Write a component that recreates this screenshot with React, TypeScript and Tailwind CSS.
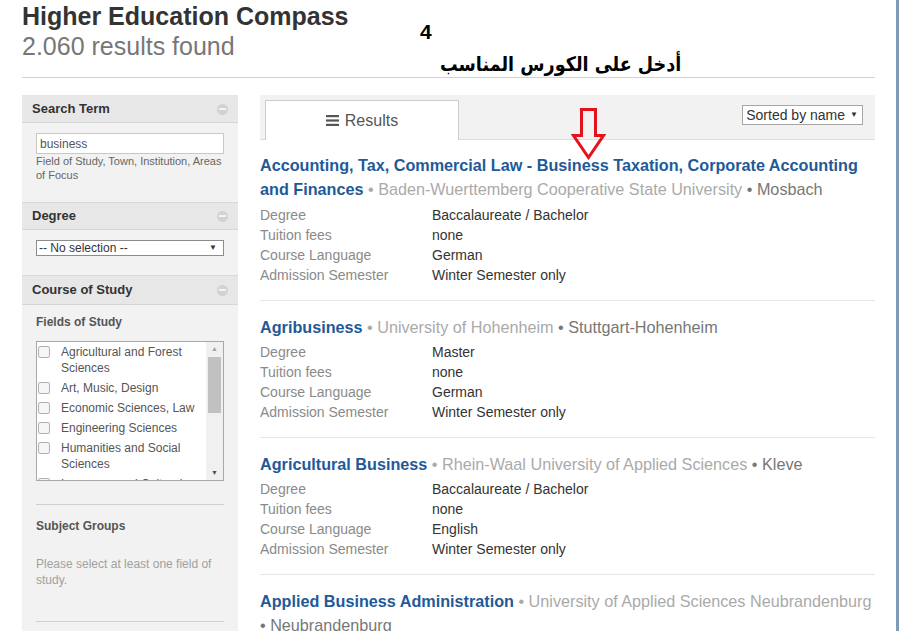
import React from "react";

function Minus() {
  return (
    <span className="flex h-[11px] w-[11px] items-center justify-center rounded-full bg-[#d2d2d2]">
      <span className="block h-[2px] w-[7px] bg-[#f4f4f4]" />
    </span>
  );
}

function PanelHeader({ title, first, tall }: { title: string; first?: boolean; tall?: boolean }) {
  return (
    <div
      className={
        "flex items-center justify-between border-b border-[#d6d6d6] bg-[#e7e7e7] pl-[10px] pr-[10px] " +
        (tall ? "h-[30px] " : "h-[28px] ") +
        (first ? "border-t border-t-[#e6e6e6]" : "border-t border-t-[#d9d9d9]")
      }
    >
      <span className="text-[13px] font-bold text-[#333]">{title}</span>
      <Minus />
    </div>
  );
}

const fields: string[] = [
  "Agricultural and Forest Sciences",
  "Art, Music, Design",
  "Economic Sciences, Law",
  "Engineering Sciences",
  "Humanities and Social Sciences",
  "Language and Cultural Studies",
];

type Result = {
  title: string;
  inst: string;
  city: string;
  degree: string;
  fees: string;
  lang: string;
  sem: string;
};

const results: Result[] = [
  {
    title: "Accounting, Tax, Commercial Law - Business Taxation, Corporate Accounting and Finances",
    inst: "Baden-Wuerttemberg Cooperative State University",
    city: "Mosbach",
    degree: "Baccalaureate / Bachelor",
    fees: "none",
    lang: "German",
    sem: "Winter Semester only",
  },
  {
    title: "Agribusiness",
    inst: "University of Hohenheim",
    city: "Stuttgart-Hohenheim",
    degree: "Master",
    fees: "none",
    lang: "German",
    sem: "Winter Semester only",
  },
  {
    title: "Agricultural Business",
    inst: "Rhein-Waal University of Applied Sciences",
    city: "Kleve",
    degree: "Baccalaureate / Bachelor",
    fees: "none",
    lang: "English",
    sem: "Winter Semester only",
  },
  {
    title: "Applied Business Administration",
    inst: "University of Applied Sciences Neubrandenburg",
    city: "Neubrandenburg",
    degree: "Bachelor",
    fees: "none",
    lang: "German",
    sem: "Winter Semester only",
  },
];

function ResultItem({ r, first }: { r: Result; first?: boolean }) {
  return (
    <div className={"border-b border-[#e6e6e6] pb-[15px] " + (first ? "pt-[13px]" : "pt-[14px]")}>
      <div className="text-[16.2px] font-bold leading-[24px] text-[#1f5a98]">
        {r.title}
        <span className="font-normal text-[#aaaaaa]"> • {r.inst}</span>
        <span className="font-normal text-[#777]"> • {r.city}</span>
      </div>
      <div
        className={
          "grid grid-cols-[172px_1fr] text-[14px] leading-[20px] " + (first ? "mt-[4px]" : "mt-[3px]")
        }
      >
        <div className="text-[#8a8a8a]">Degree</div>
        <div className="text-[#333]">{r.degree}</div>
        <div className="text-[#8a8a8a]">Tuition fees</div>
        <div className="text-[#333]">{r.fees}</div>
        <div className="text-[#8a8a8a]">Course Language</div>
        <div className="text-[#333]">{r.lang}</div>
        <div className="text-[#8a8a8a]">Admission Semester</div>
        <div className="text-[#333]">{r.sem}</div>
      </div>
    </div>
  );
}

export default function App() {
  return (
    <div className="relative h-[631px] w-[899px] overflow-hidden border-r-[3px] border-[#7f9bb5] bg-white font-['Liberation_Sans',Arial,sans-serif]">
      <div className="w-[875px] pl-[22px]">
        {/* Header */}
        <div className="pt-[2px]">
          <div className="text-[25px] font-bold leading-[29px] text-[#333]">Higher Education Compass</div>
          <div className="mt-[1px] text-[25px] leading-[29px] text-[#777]">2.060 results found</div>
          <div className="mt-[16px] h-px bg-[#d2d2d2]" />
        </div>

        <div className="mt-[17px] flex gap-[22px]">
          {/* Sidebar */}
          <div className="h-[540px] w-[216px] shrink-0 bg-[#f2f2f2]">
            <PanelHeader title="Search Term" first />
            <div className="px-[14px] pb-[20px] pt-[10px]">
              <div className="flex h-[21px] items-center border border-[#c8c8c8] bg-white px-[3px] text-[12px] text-[#555]">
                business
              </div>
              <div className="text-[11px] leading-[14px] text-[#666]">
                Field of Study, Town, Institution, Areas of Focus
              </div>
            </div>

            <PanelHeader title="Degree" />
            <div className="px-[14px] pb-[19px] pt-[10px]">
              <div className="flex h-[16px] items-center justify-between border border-[#8c8c8c] bg-white pl-[2px] pr-[6px] text-[12px] text-[#333]">
                <span>-- No selection --</span>
                <span className="text-[8px] leading-none">▼</span>
              </div>
            </div>

            <PanelHeader title="Course of Study" tall />
            <div className="px-[14px] pt-[9px]">
              <div className="text-[12px] font-bold leading-[16px] text-[#555]">Fields of Study</div>
              <div className="mt-[11px] flex h-[140px] overflow-hidden border border-[#a8a8a8] bg-white">
                <div className="flex-1 overflow-hidden pl-[1px]">
                  {fields.map((f) => (
                    <div key={f} className="flex items-start py-[2px]">
                      <span className="mt-[2px] h-[12px] w-[12px] shrink-0 rounded-[2px] border border-[#b0b0b0] bg-[#f6f6f6]" />
                      <span className="ml-[11px] text-[12px] leading-[16px] text-[#555]">{f}</span>
                    </div>
                  ))}
                </div>
                <div className="flex w-[17px] shrink-0 flex-col items-center bg-[#f0f0f0]">
                  <span className="mt-[3px] text-[7px] leading-[8px] text-[#a3a3a3]">▲</span>
                  <span className="mt-[4px] h-[56px] w-[13px] bg-[#c1c1c1]" />
                  <span className="mb-[3px] mt-auto text-[7px] leading-[8px] text-[#505050]">▼</span>
                </div>
              </div>
              <div className="mt-[23px] h-px bg-[#d0d0d0]" />
              <div className="mt-[13px] text-[12px] font-bold leading-[16px] text-[#555]">Subject Groups</div>
              <div className="mt-[22px] text-[12px] leading-[16px] text-[#a0a0a0]">
                Please select at least one field of study.
              </div>
              <div className="mt-[33px] h-px bg-[#d0d0d0]" />
            </div>
          </div>

          {/* Main */}
          <div className="w-[615px] shrink-0">
            <div className="flex h-[45px] items-start justify-between border-b border-[#dddddd] bg-[#f2f2f2] pl-[5px] pr-[12px]">
              <div className="mt-[5px] flex h-[40px] w-[194px] items-center justify-center gap-[6px] border border-b-0 border-[#cccccc] bg-white text-[16px] text-[#555]">
                <svg width="13" height="11" viewBox="0 0 13 11">
                  <rect x="0" y="0" width="13" height="2.2" fill="#555" />
                  <rect x="0" y="4.4" width="13" height="2.2" fill="#555" />
                  <rect x="0" y="8.8" width="13" height="2.2" fill="#555" />
                </svg>
                <span>Results</span>
              </div>
              <div className="mt-[10px] flex h-[20px] items-center gap-[5px] border border-[#a6a6a6] bg-white pl-[3px] pr-[4px] text-[14px] text-[#333]">
                <span>Sorted by name</span>
                <span className="text-[8px] leading-none">▼</span>
              </div>
            </div>
            {results.map((r, i) => (
              <ResultItem key={r.title} r={r} first={i === 0} />
            ))}
          </div>
        </div>
      </div>

      {/* Annotations */}
      <div className="absolute left-[420px] top-[19px] text-[21px] font-bold leading-[26px] text-black">4</div>
      <div
        dir="rtl"
        className="absolute right-[215px] top-[49px] origin-right scale-x-[0.88] whitespace-nowrap font-['DejaVu_Sans',sans-serif] text-[20px] font-bold leading-[30px] text-black"
      >
        أدخل على الكورس المناسب
      </div>
      <svg className="absolute left-[571px] top-[108px]" width="35" height="52" viewBox="0 0 35 52">
        <path
          d="M10.5 1.5 H24.5 V27.5 H32.5 L17.5 49.5 L2.5 27.5 H10.5 Z"
          fill="none"
          stroke="#e3121b"
          strokeWidth="3"
          strokeLinejoin="miter"
        />
      </svg>
    </div>
  );
}
